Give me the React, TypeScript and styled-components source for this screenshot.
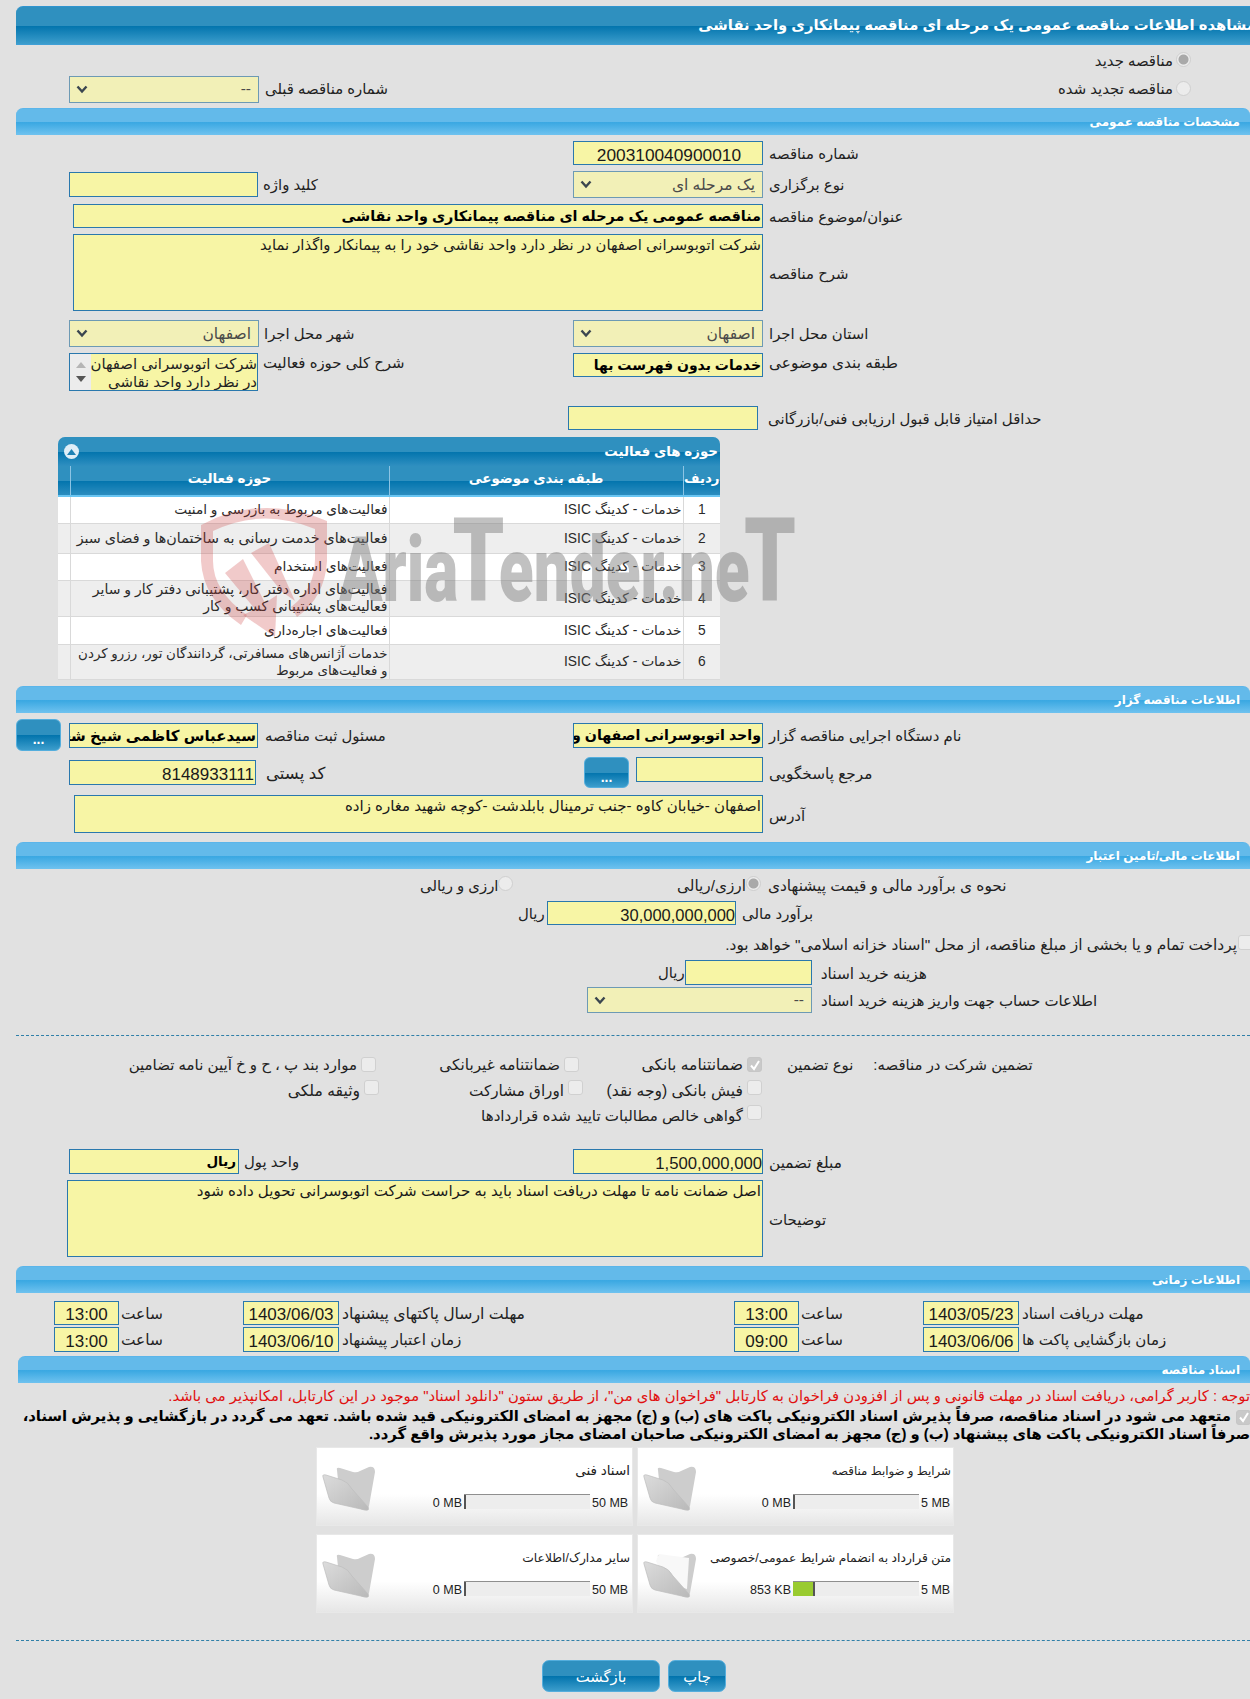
import React from "react";
import styled, { createGlobalStyle } from "styled-components";

const FONT = `"Liberation Sans", "DejaVu Sans", sans-serif`;
const Global = createGlobalStyle`
  html, body { margin: 0; padding: 0; background: #e1e1e1; width: 1250px; overflow-x: hidden; }
  body { font-family: ${FONT}; color: #1c1c1c; }
  * { box-sizing: border-box; }
`;

const Page = styled.div`
  width: 1250px;
  height: 1699px;
  padding: 6px 0 0 16px;
  overflow: hidden;
`;

const TitleBar = styled.div`
  height: 39px;
  border-radius: 7px 0 0 0;
  border-top: 1px solid #2f94cf;
  border-bottom: 1px solid #3f9fd6;
  background: linear-gradient(#2f90bf 0, #2f90bf 50%, #0274ad 51%, #3c9dcc 100%);
  display: flex;
  justify-content: flex-end;
  align-items: center;
  color: #fff;
  font-weight: 700;
  font-size: 14.8px;
  white-space: nowrap;
  padding-bottom: 2px;
`;
const TitleText = styled.span`
  direction: rtl;
  margin-right: -6px;
`;
const SectionBar = styled.div<{ $mt: number; $ml?: number }>`
  height: 27px;
  margin-top: ${(p) => p.$mt}px;
  margin-left: ${(p) => p.$ml || 0}px;
  border-radius: 7px 7px 0 0;
  background: linear-gradient(#63baea 0, #63baea 50%, #3aa8e2 52%, #6fc2ef 100%);
  border-top: 1px solid #5bb5ea;
  color: #fff;
  font-weight: 700;
  font-size: 12px;
  display: flex;
  align-items: center;
  direction: rtl;
  padding: 0 10px 1px 0;
`;
const Row = styled.div<{ $mt: number; $h: number; $top?: boolean }>`
  display: flex;
  height: ${(p) => p.$h}px;
  margin-top: ${(p) => p.$mt}px;
  align-items: ${(p) => (p.$top ? "flex-start" : "center")};
`;
const Half = styled.div<{ $w?: number; $pad?: number }>`
  display: flex;
  align-items: inherit;
  height: 100%;
  ${(p) => (p.$w ? `width: ${p.$w}px; flex: none;` : "flex: 1;")}
  padding-left: ${(p) => p.$pad ?? 0}px;
`;
const Field = styled.div<{ $w: number; $h: number; $bold?: boolean; $size?: number; $shift?: number; $pr?: number }>`
  flex: none;
  width: ${(p) => p.$w}px;
  height: ${(p) => p.$h}px;
  margin-top: ${(p) => (p.$shift || 0) * 2}px;
  background: #f7f5a5;
  border: 1px solid #2a78ad;
  direction: rtl;
  font-size: ${(p) => p.$size || 14.8}px;
  font-weight: ${(p) => (p.$bold ? 700 : 400)};
  line-height: ${(p) => p.$h - 2}px;
  white-space: nowrap;
  overflow: hidden;
  color: ${(p) => (p.$bold ? "#000" : "#1a1a1a")};
  padding-right: ${(p) => p.$pr ?? 1}px;
`;
const Numeric = styled(Field)`
  padding-top: 2px;
`;
const Area = styled(Field)`
  line-height: 20px;
  white-space: nowrap;
`;
const Centered = styled(Numeric)`
  text-align: center;
  padding-right: 0;
`;
const SelectBox = styled.div<{ $w: number; $h: number }>`
  flex: none;
  width: ${(p) => p.$w}px;
  height: ${(p) => p.$h}px;
  background: #f2f0b7;
  border: 1px solid #6d9ab4;
  display: flex;
  align-items: center;
  justify-content: space-between;
  padding: 0 7px 0 6px;
  color: #4a4a4a;
  font-size: 15.5px;
`;
const SelectValue = styled.span`
  direction: rtl;
`;
const Label = styled.div<{ $gap?: number; $shift?: number; $w?: number; $size?: number }>`
  flex: none;
  margin-left: ${(p) => p.$gap ?? 6}px;
  margin-top: ${(p) => (p.$shift ?? 0.5) * 2}px;
  ${(p) => (p.$w ? `width: ${p.$w}px;` : "")}
  direction: rtl;
  text-align: left;
  font-size: ${(p) => p.$size || 14.9}px;
  white-space: nowrap;
  color: #222;
`;
const Plain = styled.div<{ $gap?: number; $right?: number; $shift?: number; $size?: number }>`
  flex: none;
  direction: rtl;
  margin-left: ${(p) => p.$gap ?? 0}px;
  margin-right: ${(p) => p.$right ?? 0}px;
  margin-top: ${(p) => (p.$shift ?? 0.5) * 2}px;
  font-size: ${(p) => p.$size || 14.9}px;
  white-space: nowrap;
  color: #222;
`;
const RadioDot = styled.span<{ $on?: boolean; $shift?: number }>`
  flex: none;
  display: inline-block;
  width: 15px;
  height: 15px;
  border-radius: 50%;
  margin-top: ${(p) => (p.$shift ?? 0) * 2}px;
  border: 1px solid #cfcfcf;
  background: ${(p) => (p.$on ? "radial-gradient(circle, #a9a9a9 0 4.5px, #ececec 5.5px)" : "#ececec")};
`;
const Check = styled.span<{ $on?: boolean; $shift?: number }>`
  flex: none;
  display: inline-flex;
  align-items: center;
  justify-content: center;
  width: 15px;
  height: 15px;
  border-radius: 3px;
  margin-top: ${(p) => (p.$shift ?? 0) * 2}px;
  border: 1px solid ${(p) => (p.$on ? "#c6c6c6" : "#d0d0d0")};
  background: ${(p) => (p.$on ? "#c9c9c9" : "#ececec")};
`;
const RadioLine = styled.div<{ $mt: number }>`
  display: flex;
  justify-content: flex-end;
  align-items: center;
  height: 28px;
  margin-top: ${(p) => p.$mt}px;
  padding-right: 59px;
`;
const RadioLineWithSelect = styled(RadioLine)`
  justify-content: flex-start;
  padding: 0 0 0 53px;
`;
const Spacer = styled.div`
  flex: 1;
`;
const DotButton = styled.div<{ $w: number; $h: number; $gap?: number; $shift?: number }>`
  flex: none;
  width: ${(p) => p.$w}px;
  height: ${(p) => p.$h}px;
  margin-right: ${(p) => p.$gap || 0}px;
  margin-top: ${(p) => (p.$shift || 0) * 2}px;
  border-radius: 6px;
  border: 1px solid #54aedd;
  background: linear-gradient(#2f90bf 0, #2f90bf 50%, #0274ad 51%, #3c9dcc 100%);
  color: #fff;
  font-size: 14px;
  font-weight: 700;
  display: flex;
  align-items: center;
  justify-content: center;
  padding-top: 8px;
  line-height: 1;
`;
const Dashed = styled.div<{ $mt: number }>`
  margin-top: ${(p) => p.$mt}px;
  border-top: 1px dashed #2f7fa8;
`;
const ListBox = styled.div`
  flex: none;
  width: 189px;
  height: 38px;
  border: 1px solid #2a78ad;
  display: flex;
  background: #f7f5a5;
`;
const ListScroll = styled.div`
  width: 21px;
  background: #ececec;
  display: flex;
  flex-direction: column;
  align-items: center;
  justify-content: center;
  gap: 8px;
`;
const ListText = styled.div`
  flex: 1;
  direction: rtl;
  font-size: 14.9px;
  line-height: 18px;
  padding-top: 1px;
  white-space: nowrap;
  overflow: hidden;
  color: #222;
`;
const TableWrap = styled.div`
  position: relative;
  width: 662px;
  height: 242px;
  margin: 7px 0 0 42px;
  border: 1px solid #a9cde3;
  border-radius: 7px;
  background: #fff;
`;
const TableHead = styled.div`
  height: 29px;
  margin: -1px -1px 0;
  border-radius: 7px 7px 0 0;
  background: linear-gradient(#2f90bf 0, #2f90bf 50%, #0274ad 51%, #2f8fc0 100%);
  color: #fff;
  font-weight: 700;
  font-size: 13.4px;
  display: flex;
  align-items: center;
  justify-content: space-between;
  padding: 0 2px 0 6px;
`;
const TableTitle = styled.span`
  direction: rtl;
`;
const Toggle = styled.span`
  width: 15px;
  height: 15px;
  border-radius: 50%;
  background: #dfeef7;
  display: flex;
  align-items: center;
  justify-content: center;
`;
const Grid = styled.table`
  width: 662px;
  margin: 0 -1px;
  border-collapse: collapse;
  table-layout: fixed;
  direction: rtl;
`;
const Th = styled.th<{ $w: number }>`
  width: ${(p) => p.$w}px;
  height: 30px;
  padding: 0 0 5px;
  border-left: 1px solid #8cc4e4;
  border-bottom: 2px solid #69c5f2;
  background: linear-gradient(#2f90bf 0, #2f90bf 50%, #0274ad 51%, #2b8dbf 100%);
  color: #fff;
  font-size: 13.4px;
  font-weight: 700;
  white-space: nowrap;
  &:last-child { border-left: 0; }
`;
const Tr = styled.tr<{ $h: number; $alt: boolean }>`
  height: ${(p) => p.$h}px;
  background: ${(p) => (p.$alt ? "#eeeeee" : "#ffffff")};
  border-bottom: 1px solid #d9d9d9;
`;
const Td = styled.td<{ $center?: boolean; $size?: number }>`
  padding: 0 1px;
  border-left: 1px solid #d9d9d9;
  font-size: ${(p) => p.$size || 13.8}px;
  line-height: 17px;
  color: #2a2a2a;
  text-align: ${(p) => (p.$center ? "center" : "right")};
  white-space: nowrap;
  &:last-child { border-left: 0; padding: 0; }
`;
const Watermark = styled.div`
  position: absolute;
  left: 280px;
  top: 73px;
  color: rgba(125, 125, 125, 0.48);
  font-family: "Roboto", sans-serif;
  font-weight: 900;
  font-size: 90px;
  line-height: 100px;
  white-space: nowrap;
  transform: scaleX(0.71);
  transform-origin: 0 0;
  pointer-events: none;
`;
const WaterT = styled.span`
  font-size: 116px;
  margin: 0 -8px;
`;
const Shield = styled.svg`
  position: absolute;
  left: 140px;
  top: 61px;
  pointer-events: none;
`;
const CheckRow = styled.div<{ $mt: number }>`
  display: flex;
  justify-content: flex-end;
  align-items: center;
  height: 24px;
  margin-top: ${(p) => p.$mt}px;
  margin-right: -3px;
`;
const GuaranteeRow = styled.div<{ $mt: number; $cols: string }>`
  display: grid;
  grid-template-columns: ${(p) => p.$cols} 1fr;
  height: 25px;
  margin-top: ${(p) => p.$mt}px;
  align-items: center;
`;
const Option = styled.div<{ $span?: boolean }>`
  display: flex;
  justify-content: flex-end;
  align-items: center;
  gap: 4px;
  ${(p) => (p.$span ? "grid-column: 1 / 4;" : "")}
`;
const Terms = styled.div`
  display: flex;
  padding-left: 25px;
  gap: 20px;
`;
const Note = styled.div`
  height: 18px;
  margin-top: 4px;
  direction: rtl;
  color: #e01010;
  font-size: 14.8px;
  line-height: 18px;
  white-space: nowrap;
`;
const Pledge = styled.div`
  height: 36px;
  margin-top: 2px;
  direction: rtl;
  color: #000;
  font-weight: 700;
  font-size: 14.8px;
  line-height: 18px;
  white-space: nowrap;
`;
const PledgeCheck = styled(Check)`
  margin: 0 -1px 0 5px;
  vertical-align: -2px;
`;
const Cards = styled.div`
  display: grid;
  grid-template-columns: 317px 317px;
  gap: 8px 4px;
  margin: 4px 0 0 300px;
  width: 638px;
`;
const Card = styled.div`
  height: 79px;
  display: flex;
  background: linear-gradient(#ffffff 0, #ffffff 60%, #e6e6e6 100%);
  border: 1px solid #e8e8e8;
`;
const CardFolder = styled.svg`
  flex: none;
  margin: 18px 0 0 5px;
`;
const CardBody = styled.div`
  flex: 1;
  display: flex;
  flex-direction: column;
  padding: 15px 2px 0 0;
`;
const CardTitle = styled.div<{ $size: number }>`
  direction: rtl;
  font-size: ${(p) => p.$size}px;
  line-height: 16px;
  white-space: nowrap;
  color: #222;
`;
const MeterRow = styled.div`
  display: flex;
  justify-content: flex-end;
  align-items: center;
  margin-top: 15px;
  height: 15px;
  font-size: 12.5px;
  color: #222;
`;
const MeterBar = styled.div`
  width: 126px;
  height: 15px;
  margin: 0 2px 0 2px;
  background: #ededed;
  border-top: 1px solid #8f8f8f;
  display: flex;
`;
const MeterFill = styled.div`
  height: 100%;
  background: #99cb30;
  border-right: 2px solid #555;
  min-width: 2px;
`;
const MeterStart = styled.span`
  padding-top: 3px;
  white-space: nowrap;
`;
const MeterEnd = styled(MeterStart)<{ $w: number }>`
  width: ${(p) => p.$w}px;
`;
const Footer = styled.div`
  display: flex;
  gap: 8px;
  margin: 19px 0 0 526px;
`;
const FootButton = styled.div<{ $w: number }>`
  width: ${(p) => p.$w}px;
  height: 32px;
  border-radius: 7px;
  border: 1px solid #54aedd;
  background: linear-gradient(#2f90bf 0, #2f90bf 50%, #0274ad 51%, #3c9dcc 100%);
  color: #fff;
  font-size: 14.8px;
  display: flex;
  align-items: center;
  justify-content: center;
  direction: rtl;
`;

const Chevron = () => (
  <svg width="12" height="9" viewBox="0 0 12 9">
    <path d="M1.5 1.5 6 6.5l4.5-5" fill="none" stroke="#3b4650" strokeWidth="2.4" />
  </svg>
);
const Tick = () => (
  <svg width="12" height="12" viewBox="0 0 12 12">
    <path d="M2 6.5 5 10 10 2" fill="none" stroke="#fff" strokeWidth="2" />
  </svg>
);
const Select = ({ w, h, v }: { w: number; h: number; v: string }) => (
  <SelectBox $w={w} $h={h}>
    <Chevron />
    <SelectValue>{v}</SelectValue>
  </SelectBox>
);

const Folder = ({ paper }: { paper?: boolean }) => (
  <CardFolder width="54" height="46" viewBox="0 0 54 46">
    <defs>
      <linearGradient id="fg" x1="0" y1="0" x2="1" y2="1">
        <stop offset="0" stopColor="#dcdcdc" />
        <stop offset="1" stopColor="#b9b9b9" />
      </linearGradient>
    </defs>
    <path d="M15 4Q14 1 18 2L31 6Q35 7 38 5L47 1Q53 0 53 6L47 40Q46 45 41 44L18 34Z" fill="#cdcdcd" />
    {paper && <path d="M13 8 16 1 46 5 44 36 24 30Z" fill="#f8f8f8" />}
    <path d="M1 11Q0 8 4 9L20 14Q26 16 30 23L46 41Q48 45 43 44L12 37Q8 36 7 32Z" fill="url(#fg)" stroke="#bdbdbd" strokeWidth=".7" />
  </CardFolder>
);

const FileCard = ({ title, size = 12.3, min, max, w, fill }: { title: string; size?: number; min: string; max: string; w: number; fill?: number }) => (
  <Card>
    <Folder paper={!!fill} />
    <CardBody>
      <CardTitle $size={size}>{title}</CardTitle>
      <MeterRow>
        <MeterStart>{min}</MeterStart>
        <MeterBar>
          <MeterFill style={{ width: fill || 2 }} />
        </MeterBar>
        <MeterEnd $w={w}>{max}</MeterEnd>
      </MeterRow>
    </CardBody>
  </Card>
);

const rows: [number, string, string[], number, number][] = [
  [1, "خدمات - کدینگ ISIC", ["فعالیت‌های مربوط به بازرسی و امنیت"], 27, 13.7],
  [2, "خدمات - کدینگ ISIC", ["فعالیت‌های خدمت رسانی به ساختمان‌ها و فضای سبز"], 30, 14.3],
  [3, "خدمات - کدینگ ISIC", ["فعالیت‌های استخدام"], 27, 13.8],
  [4, "خدمات - کدینگ ISIC", ["فعالیت‌های  اداره دفتر کار، پشتیبانی دفتر کار و سایر", "فعالیت‌های پشتیبانی کسب و کار"], 36, 14],
  [5, "خدمات - کدینگ ISIC", ["فعالیت‌های اجاره‌داری"], 28, 13.8],
  [6, "خدمات - کدینگ ISIC", ["خدمات آژانس‌های مسافرتی، گردانندگان تور، رزرو کردن", "و فعالیت‌های مربوط"], 35, 13.4],
];

const COLS_A = "360px 203px 183px";
const COLS_B = "363px 204px 179px";

export default function App() {
  return (
    <Page>
      <Global />
      <TitleBar>
        <TitleText>مشاهده اطلاعات مناقصه عمومی یک مرحله ای مناقصه پیمانکاری واحد نقاشی</TitleText>
      </TitleBar>

      <RadioLine $mt={2}>
        <Plain $right={3} $shift={0}>مناقصه جدید</Plain>
        <RadioDot $on $shift={-2} />
      </RadioLine>
      <RadioLineWithSelect $mt={0}>
        <Select w={190} h={27} v="--" />
        <Label $shift={0}>شماره مناقصه قبلی</Label>
        <Spacer />
        <Plain $right={3} $shift={0}>مناقصه تجدید شده</Plain>
        <RadioDot $shift={-1} />
        <Plain $right={59} />
      </RadioLineWithSelect>

      <SectionBar $mt={5}>مشخصات مناقصه عمومی</SectionBar>
      <Row $mt={6} $h={24}>
        <Half $w={541} $pad={53} />
        <Half $pad={16}>
          <Numeric $w={190} $h={24} $size={17.3} $pr={21}>200310040900010</Numeric>
          <Label>شماره مناقصه</Label>
        </Half>
      </Row>
      <Row $mt={6} $h={27}>
        <Half $w={541} $pad={53}>
          <Field $w={189} $h={25} />
          <Label $gap={5}>کلید واژه</Label>
        </Half>
        <Half $pad={16}>
          <Select w={190} h={27} v="یک مرحله ای" />
          <Label>نوع برگزاری</Label>
        </Half>
      </Row>
      <Row $mt={6} $h={24}>
        <Half $pad={57}>
          <Field $w={690} $h={24} $bold $size={14.4}>مناقصه عمومی یک مرحله ای مناقصه پیمانکاری واحد نقاشی</Field>
          <Label>عنوان/موضوع مناقصه</Label>
        </Half>
      </Row>
      <Row $mt={6} $h={77}>
        <Half $pad={57}>
          <Area $w={690} $h={77}>شرکت اتوبوسرانی اصفهان در نظر دارد واحد نقاشی خود را به پیمانکار واگذار نماید</Area>
          <Label $shift={1.5}>شرح مناقصه</Label>
        </Half>
      </Row>
      <Row $mt={9} $h={27}>
        <Half $w={541} $pad={53}>
          <Select w={190} h={27} v="اصفهان" />
          <Label $gap={5}>شهر محل اجرا</Label>
        </Half>
        <Half $pad={16}>
          <Select w={190} h={27} v="اصفهان" />
          <Label>استان محل اجرا</Label>
        </Half>
      </Row>
      <Row $mt={6} $h={38} $top>
        <Half $w={541} $pad={53}>
          <ListBox>
            <ListScroll>
              <svg width="10" height="6" viewBox="0 0 10 6"><path d="M5 0 10 6H0Z" fill="#b5b5b5" /></svg>
              <svg width="10" height="6" viewBox="0 0 10 6"><path d="M0 0H10L5 6Z" fill="#555" /></svg>
            </ListScroll>
            <ListText>
              شرکت اتوبوسرانی اصفهان
              <br />
              در نظر دارد واحد نقاشی
            </ListText>
          </ListBox>
          <Label $gap={5}>شرح کلی حوزه فعالیت</Label>
        </Half>
        <Half $pad={16}>
          <Field $w={190} $h={24} $bold $size={14}>خدمات بدون فهرست بها</Field>
          <Label $size={15.3}>طبقه بندی موضوعی</Label>
        </Half>
      </Row>
      <Row $mt={15} $h={24}>
        <Half $w={541} $pad={53} />
        <Half $pad={11}>
          <Field $w={190} $h={24} />
          <Label $gap={10}>حداقل امتیاز قابل قبول ارزیابی فنی/بازرگانی</Label>
        </Half>
      </Row>

      <TableWrap>
        <TableHead>
          <Toggle>
            <svg width="9" height="6" viewBox="0 0 9 6"><path d="M4.5 0 9 6H0Z" fill="#1f82b5" /></svg>
          </Toggle>
          <TableTitle>حوزه های فعالیت</TableTitle>
        </TableHead>
        <Grid>
          <thead>
            <tr>
              <Th $w={37}>ردیف</Th>
              <Th $w={294}>طبقه بندی موضوعی</Th>
              <Th $w={319}>حوزه فعالیت</Th>
              <Th $w={12} />
            </tr>
          </thead>
          <tbody>
            {rows.map(([n, cat, lines, h, size], i) => (
              <Tr key={n} $h={h} $alt={i % 2 === 1}>
                <Td $center>{n}</Td>
                <Td>{cat}</Td>
                <Td $size={size}>
                  {lines.map((l) => (
                    <div key={l}>{l}</div>
                  ))}
                </Td>
                <Td />
              </Tr>
            ))}
          </tbody>
        </Grid>
        <Shield width="136" height="142" viewBox="0 0 136 142">
          <path d="M2 26Q62-6 128 22V62Q126 98 98 118L92 108Q116 90 116 60V30Q64 8 14 32V62Q14 92 48 116L42 126Q4 100 2 62Z" fill="rgba(205,60,60,.27)" />
          <path d="M26 74 44 60 66 104 78 96 76 138 44 116 56 110Z" fill="rgba(205,60,60,.27)" />
          <path d="M52 54 70 44 96 102 82 92Z" fill="rgba(205,60,60,.27)" />
        </Shield>
        <Watermark>
          Aria<WaterT>T</WaterT>ender.ne<WaterT>T</WaterT>
        </Watermark>
      </TableWrap>

      <SectionBar $mt={7}>اطلاعات مناقصه گزار</SectionBar>
      <Row $mt={6} $h={32}>
        <Half $w={541} $pad={0}>
          <DotButton $w={45} $h={32} $gap={8}>...</DotButton>
          <Field $w={189} $h={25} $bold $size={15}>سیدعباس کاظمی شیخ شعبانی</Field>
          <Label $gap={7} $shift={1}>مسئول ثبت مناقصه</Label>
        </Half>
        <Half $pad={16}>
          <Field $w={190} $h={25} $bold $size={14.2}>واحد اتوبوسرانی اصفهان و حومه</Field>
          <Label $shift={1}>نام دستگاه اجرایی مناقصه گزار</Label>
        </Half>
      </Row>
      <Row $mt={6} $h={31}>
        <Half $w={541} $pad={53}>
          <Numeric $w={187} $h={25} $size={17}>8148933111</Numeric>
          <Label $gap={10} $shift={1} $size={16.6}>کد پستی</Label>
        </Half>
        <Half $pad={27}>
          <DotButton $w={45} $h={31} $gap={7}>...</DotButton>
          <Field $w={127} $h={25} $shift={-3} />
          <Label $shift={1} $size={15.3}>مرجع پاسخگویی</Label>
        </Half>
      </Row>
      <Row $mt={7} $h={38}>
        <Half $pad={58}>
          <Area $w={689} $h={38} $size={15}>اصفهان -خیابان کاوه -جنب ترمینال بابلدشت -کوچه شهید مغاره زاده</Area>
          <Label $shift={1.5}>آدرس</Label>
        </Half>
      </Row>

      <SectionBar $mt={9}>اطلاعات مالی/تامین اعتبار</SectionBar>
      <Row $mt={4} $h={26}>
        <Half $w={541} $pad={404}>
          <Plain $shift={0}>ارزی و ریالی</Plain>
          <RadioDot $shift={-3} />
        </Half>
        <Half $pad={120}>
          <Plain $shift={0} $size={15.3}>ارزی/ریالی</Plain>
          <RadioDot $on $shift={-3} />
          <Label $gap={7} $shift={0} $size={15.4}>نحوه ی برآورد مالی و قیمت پیشنهادی</Label>
        </Half>
      </Row>
      <Row $mt={2} $h={24}>
        <Half $w={531} $pad={502}>
          <Plain>ریال</Plain>
        </Half>
        <Half>
          <Numeric $w={189} $h={24} $size={16.5} $pr={0}>30,000,000,000</Numeric>
          <Label $gap={6}>برآورد مالی</Label>
        </Half>
      </Row>
      <CheckRow $mt={8}>
        <Plain $right={1} $shift={-0.5} $size={15.4}>پرداخت تمام و یا بخشی از مبلغ مناقصه، از محل "اسناد خزانه اسلامی" خواهد بود.</Plain>
        <Check $shift={-3} />
      </CheckRow>
      <Row $mt={3} $h={25}>
        <Half $w={541} />
        <Half $pad={101}>
          <Plain>ریال</Plain>
          <Field $w={127} $h={25} />
          <Label $gap={9} $shift={1} $size={15.4}>هزینه خرید اسناد</Label>
        </Half>
      </Row>
      <Row $mt={2} $h={26}>
        <Half $w={541} />
        <Half $pad={30}>
          <Select w={225} h={26} v="--" />
          <Label $gap={9} $size={15}>اطلاعات حساب جهت واریز هزینه خرید اسناد</Label>
        </Half>
      </Row>
      <Dashed $mt={22} />

      <GuaranteeRow $mt={17} $cols={COLS_A}>
        <Option><Plain $shift={-0.5} $size={15}>موارد بند پ ، ح و خ آیین نامه تضامین</Plain><Check $shift={-1} /></Option>
        <Option><Plain $shift={-0.5} $size={15.3}>ضمانتنامه غیربانکی</Plain><Check $shift={-1} /></Option>
        <Option><Plain $shift={-0.5} $size={15.6}>ضمانتنامه بانکی</Plain><Check $on $shift={-1}><Tick /></Check></Option>
        <Terms><Plain $shift={-0.5}>نوع تضمین</Plain><Plain $shift={-0.5}>تضمین شرکت در مناقصه:</Plain></Terms>
      </GuaranteeRow>
      <GuaranteeRow $mt={0} $cols={COLS_B}>
        <Option><Plain $shift={0} $size={15.6}>وثیقه ملکی</Plain><Check $shift={-3} /></Option>
        <Option><Plain $shift={0} $size={15.2}>اوراق مشارکت</Plain><Check $shift={-3} /></Option>
        <Option><Plain $shift={0} $size={15.6}>فیش بانکی (وجه نقد)</Plain><Check $shift={-3} /></Option>
      </GuaranteeRow>
      <GuaranteeRow $mt={0} $cols={COLS_A}>
        <Option $span><Plain $shift={0} $size={15.1}>گواهی خالص مطالبات تایید شده قراردادها</Plain><Check $shift={-3} /></Option>
      </GuaranteeRow>

      <Row $mt={21} $h={25}>
        <Half $w={541} $pad={53}>
          <Field $w={170} $h={25} $bold $size={13.5} $pr={2}>ریال</Field>
          <Label $gap={5}>واحد پول</Label>
        </Half>
        <Half $pad={16}>
          <Numeric $w={190} $h={25} $size={16.7} $pr={0}>1,500,000,000</Numeric>
          <Label $shift={1} $size={15.3}>مبلغ تضمین</Label>
        </Half>
      </Row>
      <Row $mt={6} $h={77}>
        <Half $pad={51}>
          <Area $w={696} $h={77} $size={15.1}>اصل ضمانت نامه تا مهلت دریافت اسناد باید به حراست شرکت اتوبوسرانی تحویل داده شود</Area>
          <Label $shift={1.5}>توضیحات</Label>
        </Half>
      </Row>

      <SectionBar $mt={9}>اطلاعات زمانی</SectionBar>
      <Row $mt={8} $h={24}>
        <Half $w={541} $pad={38}>
          <Centered $w={65} $h={24} $size={17}>13:00</Centered>
          <Label $gap={2} $w={122} $size={15.4}>ساعت</Label>
          <Centered $w={96} $h={24} $size={17}>1403/06/03</Centered>
          <Label $gap={3} $size={15.7}>مهلت ارسال پاکتهای پیشنهاد</Label>
        </Half>
        <Half $pad={177}>
          <Centered $w={65} $h={24} $size={17}>13:00</Centered>
          <Label $gap={2} $w={122} $size={15.4}>ساعت</Label>
          <Centered $w={96} $h={24} $size={17}>1403/05/23</Centered>
          <Label $gap={3} $size={15.2}>مهلت دریافت اسناد</Label>
        </Half>
      </Row>
      <Row $mt={2} $h={25}>
        <Half $w={541} $pad={38}>
          <Centered $w={65} $h={25} $size={17}>13:00</Centered>
          <Label $gap={2} $w={122} $size={15.4}>ساعت</Label>
          <Centered $w={96} $h={25} $size={17}>1403/06/10</Centered>
          <Label $gap={3} $size={15.2}>زمان اعتبار پیشنهاد</Label>
        </Half>
        <Half $pad={177}>
          <Centered $w={65} $h={25} $size={17}>09:00</Centered>
          <Label $gap={2} $w={122} $size={15.4}>ساعت</Label>
          <Centered $w={96} $h={25} $size={17}>1403/06/06</Centered>
          <Label $gap={3} $size={15}>زمان بازگشایی پاکت ها</Label>
        </Half>
      </Row>

      <SectionBar $mt={4} $ml={2}>اسناد مناقصه</SectionBar>
      <Note>توجه : کاربر گرامی، دریافت اسناد در مهلت قانونی و پس از افزودن فراخوان به کارتابل "فراخوان های من"، از طریق ستون "دانلود اسناد" موجود در این کارتابل، امکانپذیر می باشد.</Note>
      <Pledge>
        <PledgeCheck $on><Tick /></PledgeCheck>
        متعهد می شود در اسناد مناقصه، صرفاً پذیرش اسناد الکترونیکی پاکت های (ب) و (ج) مجهز به امضای الکترونیکی قید شده باشد. تعهد می گردد در بازگشایی و پذیرش اسناد،
        <br />
        صرفاً اسناد الکترونیکی پاکت های پیشنهاد (ب) و (ج) مجهز به امضای الکترونیکی صاحبان امضای مجاز مورد پذیرش واقع گردد.
      </Pledge>
      <Cards>
        <FileCard title="اسناد فنی" size={13.5} min="0 MB" max="50 MB" w={38} />
        <FileCard title="شرایط و ضوابط مناقصه" size={11.8} min="0 MB" max="5 MB" w={30} />
        <FileCard title="سایر مدارک/اطلاعات" min="0 MB" max="50 MB" w={38} />
        <FileCard title="متن قرارداد به انضمام شرایط عمومی/خصوصی" min="853 KB" max="5 MB" w={30} fill={22} />
      </Cards>
      <Dashed $mt={27} />
      <Footer>
        <FootButton $w={118}>بازگشت</FootButton>
        <FootButton $w={58}>چاپ</FootButton>
      </Footer>
    </Page>
  );
}
